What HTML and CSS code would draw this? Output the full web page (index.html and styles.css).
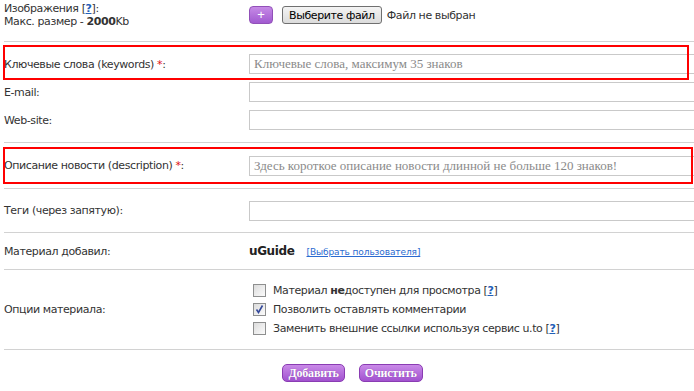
FILE: index.html
```html
<!DOCTYPE html>
<html lang="ru">
<head>
  <meta charset="UTF-8">
  <title>Добавить материал</title>
  <link rel="stylesheet" href="styles.css">
</head>
<body>
  <div class="form">

    <div class="row row-image">
      <div class="label">
        Изображения [<a href="#" class="help">?</a>]:<br>
        Макс. размер - <b>2000</b>Kb
      </div>
      <div class="field files">
        <button class="plus">+</button>
        <button class="file-btn">Выберите файл</button>
        <span class="file-name">Файл не выбран</span>
      </div>
    </div>

    <div class="sep"></div>

    <div class="group">
      <div class="row row-input">
        <div class="mark mark-keywords"></div>
        <div class="label">Ключевые слова (keywords) <span class="req">*</span>:</div>
        <div class="field"><input type="text" placeholder="Ключевые слова, максимум 35 знаков"></div>
      </div>
      <div class="row row-input">
        <div class="label">E-mail:</div>
        <div class="field"><input type="text"></div>
      </div>
      <div class="row row-input">
        <div class="label">Web-site:</div>
        <div class="field"><input type="text"></div>
      </div>
    </div>

    <div class="sep"></div>

    <div class="row row-single">
      <div class="mark mark-description"></div>
      <div class="label">Описание новости (description) <span class="req">*</span>:</div>
      <div class="field"><input type="text" placeholder="Здесь короткое описание новости длинной не больше 120 знаков!"></div>
    </div>

    <div class="sep"></div>

    <div class="row row-single row-tags">
      <div class="label">Теги (через запятую):</div>
      <div class="field"><input type="text"></div>
    </div>

    <div class="sep"></div>

    <div class="row row-author">
      <div class="label">Материал добавил:</div>
      <div class="field">
        <b class="user">uGuide</b>
        <a href="#" class="pick">[Выбрать пользователя]</a>
      </div>
    </div>

    <div class="sep"></div>

    <div class="row row-options">
      <div class="label">Опции материала:</div>
      <div class="field options">
        <label class="option"><span class="box"></span><span>Материал <b>не</b>доступен для просмотра [<a href="#" class="help">?</a>]</span></label>
        <label class="option"><span class="box">
          <svg width="11" height="11" viewBox="0 0 11 11"><path d="M2.5 5.5 L4.5 8.5 L8.5 1.5" fill="none" stroke="#33489a" stroke-width="1.6"/></svg>
        </span><span>Позволить оставлять комментарии</span></label>
        <label class="option"><span class="box"></span><span>Заменить внешние ссылки используя сервис u.to [<a href="#" class="help">?</a>]</span></label>
      </div>
    </div>

    <div class="sep"></div>

    <div class="actions">
      <button class="btn">Добавить</button>
      <button class="btn">Очистить</button>
    </div>

  </div>
</body>
</html>
```

FILE: styles.css
```css
html, body {
  overflow: hidden;
}

body {
  margin: 0;
  background: #fff;
  color: #333;
  font-family: "DejaVu Sans", Tahoma, sans-serif;
  font-size: 11px;
  letter-spacing: -0.4px;
}

.form {
  padding-left: 4px;
}

.row {
  display: grid;
  grid-template-columns: 245px 1fr;
  align-items: center;
  position: relative;
}

.sep {
  height: 1px;
  background: #d2d2d2;
}

.help {
  color: #1f5fb8;
  font-weight: bold;
}

.req {
  color: #e01010;
}

/* images */
.row-image {
  align-items: start;
  height: 41px;
  box-sizing: border-box;
  padding-top: 2px;
  line-height: 13px;
}

.files {
  display: flex;
  align-items: center;
  margin-top: 4px;
}

.plus {
  width: 24px;
  height: 18px;
  padding: 0;
  border: 1px solid #9150b8;
  border-radius: 4px;
  background: linear-gradient(#c68ae6, #a15ad0);
  color: #fff;
  font-size: 13px;
  line-height: 14px;
}

.file-btn {
  margin-left: 9px;
  height: 18px;
  padding: 0 6px;
  border: 1px solid #707070;
  border-radius: 3px;
  background: linear-gradient(#f4f4f4, #dcdcdc);
  color: #000;
  font-family: "DejaVu Sans", Tahoma, sans-serif;
  font-size: 11px;
  letter-spacing: -0.4px;
}

.file-name {
  margin-left: 5px;
}

/* text inputs */
.group {
  padding: 8px 0 8px;
}

.row-input {
  height: 28px;
}

.row-single {
  height: 45px;
}

.row-tags {
  height: 43px;
}

input[type=text] {
  display: block;
  width: 470px;
  height: 20px;
  box-sizing: border-box;
  margin: 0;
  padding: 0 4px;
  border: 1px solid #c9c9c9;
  font-family: "Liberation Serif", serif;
  font-size: 13px;
  color: #333;
}

input::placeholder {
  color: #8a8a8a;
}

.mark {
  position: absolute;
  left: -1px;
  border: 2px solid #ff0000;
  box-sizing: border-box;
}

.mark-keywords {
  top: -5px;
  width: 686px;
  height: 35px;
}

.mark-description {
  top: 4px;
  width: 690px;
  height: 37px;
}

/* author */
.row-author {
  height: 36px;
}

.user {
  font-size: 12px;
  color: #222;
}

.pick {
  margin-left: 9px;
  font-size: 9px;
  letter-spacing: -0.1px;
  color: #2a6ad0;
}

/* options */
.row-options {
  height: 79px;
}

.options {
  display: flex;
  flex-direction: column;
  margin-left: 4px;
}

.option {
  display: flex;
  align-items: center;
  height: 19px;
}

.box {
  width: 13px;
  height: 13px;
  box-sizing: border-box;
  margin-right: 7px;
  border: 1px solid #8e8f8f;
  background: linear-gradient(135deg, #dcdcdc, #fbfbfb);
  display: flex;
  align-items: center;
  justify-content: center;
}

/* buttons */
.actions {
  display: flex;
  justify-content: center;
  gap: 14px;
  padding: 14px 0 0 7px;
}

.btn {
  height: 18px;
  padding: 0 5px;
  border: 1px solid #8a3cb3;
  border-radius: 5px;
  background: linear-gradient(#c98ae8, #a152cf);
  color: #fff;
  font-family: "Liberation Serif", serif;
  font-size: 12px;
  font-weight: bold;
  letter-spacing: -0.2px;
  line-height: 14px;
  text-shadow: 0 0 1px #7a3aa0;
}
```
